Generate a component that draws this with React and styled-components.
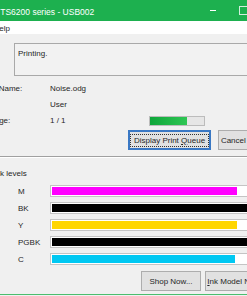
import React from 'react';
import styled, { createGlobalStyle } from 'styled-components';

const Global = createGlobalStyle`
  html, body { margin: 0; padding: 0; background: #f0f0f0; overflow: hidden; }
  body { font-family: "Liberation Sans", Arial, sans-serif; }
`;

const Viewport = styled.div`
  width: 247px;
  height: 296px;
  overflow: hidden;
  background: #f0f0f0;
`;

const Dialog = styled.div`
  width: 336px;
  height: 295px;
  margin-left: -48px;
  display: flex;
  flex-direction: column;
  font-size: 8px;
  color: #262626;
  background: #f0f0f0;
  border-bottom: 1px solid #4cbd6e;
  box-sizing: border-box;
`;

const TitleBar = styled.div`
  height: 21px;
  flex: none;
  background: #1db04f;
  color: #fff;
  display: flex;
  align-items: center;
  padding-left: 21px;
  font-size: 8.5px;
`;

const TitleText = styled.span`
  flex: 1;
  white-space: nowrap;
  padding-top: 2px;
`;

const CaptionButton = styled.div`
  width: 30px;
  height: 21px;
  display: flex;
  align-items: center;
  justify-content: center;
`;

const MinGlyph = styled.div`
  width: 6px;
  height: 1px;
  background: #fff;
`;

const MaxGlyph = styled.div`
  width: 7px;
  height: 7px;
  border: 1px solid rgba(255, 255, 255, 0.8);
`;

const MenuBar = styled.div`
  height: 12px;
  flex: none;
  background: #fff;
  display: flex;
  align-items: center;
  padding-left: 2px;
  padding-top: 1px;
`;

const MenuItem = styled.span`
  padding: 0 4px;
  white-space: nowrap;
`;

const Body = styled.div`
  flex: 1;
  display: flex;
  flex-direction: column;
  padding-top: 9px;
`;

const StatusBox = styled.div`
  margin-left: 62px;
  height: 33px;
  border: 1px solid #a9a9a9;
  border-right: none;
  box-sizing: border-box;
  padding: 5px 3px;
  line-height: 10px;
  background: #f2f2f2;
`;

const InfoRows = styled.div`
  margin-top: 4px;
  display: flex;
  flex-direction: column;
`;

const InfoRow = styled.div`
  height: 16px;
  display: flex;
  align-items: center;
`;

const Label = styled.span`
  width: 90px;
  padding-left: 8px;
  white-space: nowrap;
  flex: none;
`;

const Value = styled.span`
  width: 99px;
  flex: none;
  white-space: nowrap;
`;

const Progress = styled.div`
  width: 56px;
  height: 10px;
  margin-top: 2px;
  border: 1px solid #bcbcbc;
  background: #e6e6e6;
  box-sizing: border-box;
  overflow: hidden;
`;

const ProgressFill = styled.div`
  height: 100%;
  background: linear-gradient(to right, #0ea63a, #2fc654);
`;

const ButtonRow = styled.div`
  display: flex;
  gap: ${p => p.$gap}px;
  padding-left: ${p => p.$left}px;
  margin-top: ${p => p.$top}px;
`;

const Button = styled.div`
  width: ${p => p.$w}px;
  height: 20px;
  flex: none;
  box-sizing: border-box;
  background: #e1e1e1;
  border: ${p => (p.$default ? '2px solid #3a78c4' : '1px solid #adadad')};
  display: flex;
  align-items: center;
  justify-content: center;
  white-space: nowrap;
`;

const FocusRing = styled.span`
  padding: 0 2px;
  outline: 1px dotted #333;
  outline-offset: 1px;
`;

const Separator = styled.div`
  margin-top: 6px;
  height: 1px;
  background: #a0a0a0;
  border-bottom: 1px solid #fff;
`;

const SectionLabel = styled.div`
  margin-top: 10px;
  padding-left: 4px;
  height: 12px;
  line-height: 12px;
  white-space: nowrap;
`;

const InkList = styled.div`
  margin-top: 5px;
  display: flex;
  flex-direction: column;
  gap: 5px;
`;

const InkRow = styled.div`
  display: grid;
  grid-template-columns: 32px 1fr;
  padding-left: 66px;
  align-items: center;
  height: 12px;
`;

const InkName = styled.span`
  white-space: nowrap;
`;

const InkBar = styled.div`
  height: 12px;
  box-sizing: border-box;
  border: 1px solid #c4c4c4;
  padding: 1px;
  background: #fff;
`;

const InkFill = styled.div`
  height: 100%;
  background: ${p => p.$color};
`;

const U = styled.span`
  text-decoration: underline;
`;

const inks = [
  { name: 'M', color: '#ff00ff', pct: 79 },
  { name: 'BK', color: '#000000', pct: 100 },
  { name: 'Y', color: '#ffd600', pct: 79 },
  { name: 'PGBK', color: '#000000', pct: 100 },
  { name: 'C', color: '#00c8f2', pct: 78 },
];

export default function App() {
  return (
    <Viewport>
      <Global />
      <Dialog>
        <TitleBar>
          <TitleText>Canon TS6200 series - USB002</TitleText>
          <CaptionButton><MinGlyph /></CaptionButton>
          <CaptionButton><MaxGlyph /></CaptionButton>
          <CaptionButton />
        </TitleBar>
        <MenuBar>
          <MenuItem>Options</MenuItem>
          <MenuItem>Help</MenuItem>
        </MenuBar>
        <Body>
          <StatusBox>Printing.</StatusBox>
          <InfoRows>
            <InfoRow>
              <Label>Document Name:</Label>
              <Value>Noise.odg</Value>
            </InfoRow>
            <InfoRow>
              <Label>Owner:</Label>
              <Value>User</Value>
            </InfoRow>
            <InfoRow>
              <Label>Printing Page:</Label>
              <Value>1 / 1</Value>
              <Progress>
                <ProgressFill style={{ width: '68%' }} />
              </Progress>
            </InfoRow>
          </InfoRows>
          <ButtonRow $left={176} $gap={7} $top={2}>
            <Button $w={83} $default>
              <FocusRing>Display Print <U>Q</U>ueue</FocusRing>
            </Button>
            <Button $w={60}>Cancel Printing</Button>
          </ButtonRow>
          <Separator />
          <SectionLabel>Estimated ink levels</SectionLabel>
          <InkList>
            {inks.map(ink => (
              <InkRow key={ink.name}>
                <InkName>{ink.name}</InkName>
                <InkBar>
                  <InkFill $color={ink.color} style={{ width: `${ink.pct}%` }} />
                </InkBar>
              </InkRow>
            ))}
          </InkList>
          <ButtonRow $left={189} $gap={4} $top={6}>
            <Button $w={60}>Shop Now...</Button>
            <Button $w={70}><U>I</U>nk Model Number</Button>
          </ButtonRow>
        </Body>
      </Dialog>
    </Viewport>
  );
}
